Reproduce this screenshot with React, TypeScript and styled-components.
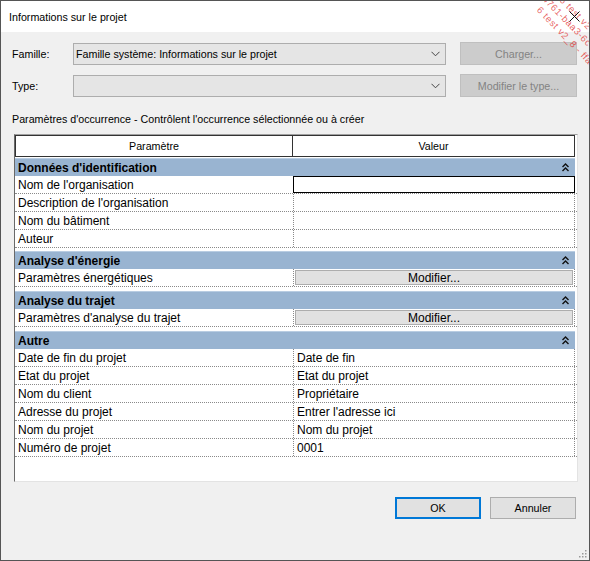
import styled, { createGlobalStyle } from "styled-components"

const GlobalStyle = createGlobalStyle`
  html, body { margin: 0; padding: 0; background: #fff; }
  body {
    font-family: "Liberation Sans", Arial, sans-serif;
    font-size: 10.7px;
    color: #000;
  }
`

const Window = styled.div`
  position: relative;
  width: 590px;
  height: 561px;
  box-sizing: border-box;
  border: 1px solid #555;
  background: #f0f0f0;
  display: flex;
  flex-direction: column;
  overflow: hidden;
`
const TitleBar = styled.div`
  height: 31px;
  flex: none;
  background: #fff;
  display: flex;
  align-items: center;
  justify-content: space-between;
  padding: 0 9px 0 8px;
  font-size: 10.7px;
`
const CloseIcon = styled.svg`
  width: 11px;
  height: 11px;
  position: relative;
  z-index: 2;
`
const Body = styled.div`
  flex: 1;
  display: flex;
  flex-direction: column;
  padding: 10px 12px 0 11px;
`
const FormGrid = styled.div`
  display: grid;
  grid-template-columns: 47px 373px 117px;
  column-gap: 14px;
  row-gap: 9px;
  align-items: center;
`
const FieldLabel = styled.div`
  font-size: 10.7px;
`
const Combo = styled.div`
  height: 22px;
  box-sizing: border-box;
  border: 1px solid #adadad;
  background: #e5e5e5;
  display: flex;
  align-items: center;
  justify-content: space-between;
  padding: 0 5px 0 2px;
  font-size: 10.7px;
`
const DisabledButton = styled.div`
  height: 23px;
  box-sizing: border-box;
  border: 1px solid #bfbfbf;
  background: #cccccc;
  color: #838383;
  display: flex;
  align-items: center;
  justify-content: center;
  font-size: 10.7px;
`
const SectionLabel = styled.div`
  margin-top: 14px;
  height: 16px;
  line-height: 16px;
  font-size: 10.7px;
`
const Table = styled.div`
  margin: 7px 0 0 2px;
  width: 564px;
  height: 348px;
  box-sizing: border-box;
  border-style: solid;
  border-width: 1px;
  border-color: #a0a0a0 #e3e3e3 #e3e3e3 #696969;
  background: #fff;
  display: flex;
  flex-direction: column;
  font-size: 12px;
`
const HeaderRow = styled.div`
  display: grid;
  grid-template-columns: 278px 282px;
  height: 22px;
`
const HeaderCell = styled.div<{ $first?: boolean }>`
  border: 1px solid #333;
  border-left-width: ${(p) => (p.$first ? "1px" : "0")};
  display: flex;
  align-items: center;
  justify-content: center;
  font-size: 10.7px;
`
const GroupRow = styled.div<{ $gap: number }>`
  margin-top: ${(p) => p.$gap}px;
  width: 560px;
  height: 18px;
  box-sizing: border-box;
  background: #99b4d1;
  border-top: 1px solid #b9cde2;
  display: flex;
  align-items: center;
  justify-content: space-between;
  padding: 0 6px 0 3px;
  font-weight: bold;
  font-size: 12px;
`
const Row = styled.div`
  display: grid;
  grid-template-columns: 278px 282px;
  height: 18px;
  box-sizing: border-box;
  border-bottom: 1px dotted #8a8a8a;
`
const Cell = styled.div`
  display: flex;
  align-items: center;
  padding-left: 3px;
  font-size: 12px;
  white-space: nowrap;
`
const ValueCell = styled(Cell)<{ $selected?: boolean }>`
  border-left: 1px dotted #8a8a8a;
  border-right: 1px dotted #8a8a8a;
  ${(p) => (p.$selected ? "outline: 1px solid #000; outline-offset: -1px;" : "")}
`
const InlineButton = styled.div`
  flex: 1;
  height: 15px;
  margin: 0 1px 0 -2px;
  box-sizing: border-box;
  border: 1px solid #adadad;
  background: #e1e1e1;
  display: flex;
  align-items: center;
  justify-content: center;
  font-size: 12px;
`
const Footer = styled.div`
  margin-top: 15px;
  display: flex;
  justify-content: flex-end;
  gap: 9px;
  padding-right: 1px;
`
const DialogButton = styled.div<{ $default?: boolean }>`
  width: 86px;
  height: 22px;
  box-sizing: border-box;
  border: ${(p) => (p.$default ? "2px solid #0078d7" : "1px solid #adadad")};
  background: #e1e1e1;
  display: flex;
  align-items: center;
  justify-content: center;
  font-size: 10.7px;
`
const Grip = styled.svg`
  position: absolute;
  right: 2px;
  bottom: 2px;
  width: 10px;
  height: 10px;
`
const Watermark = styled.div`
  position: absolute;
  top: 0;
  right: 0;
  width: 110px;
  height: 80px;
  overflow: hidden;
  pointer-events: none;
  z-index: 1;
`
const WatermarkLine = styled.span<{ $x: number; $y: number }>`
  position: absolute;
  left: ${(p) => p.$x}px;
  top: ${(p) => p.$y}px;
  transform: rotate(46deg);
  transform-origin: 0 0;
  color: rgba(226, 60, 60, 0.8);
  font-size: 9.5px;
  line-height: 10px;
  white-space: nowrap;
  letter-spacing: 0.6px;
`

const ChevronDown = () => (
  <svg width="9" height="6" viewBox="0 0 9 6">
    <polyline points="0.5,0.8 4.5,4.8 8.5,0.8" fill="none" stroke="#444" strokeWidth="1" />
  </svg>
)

const Collapse = () => (
  <svg width="7" height="9" viewBox="0 0 7 9">
    <polyline points="0.5,4 3.5,1 6.5,4" fill="none" stroke="#111" strokeWidth="1.4" />
    <polyline points="0.5,8 3.5,5 6.5,8" fill="none" stroke="#111" strokeWidth="1.4" />
  </svg>
)

type RowData = { label: string; value?: string; button?: boolean; selected?: boolean }
type Group = { title: string; gap: number; rows: RowData[] }

const groups: Group[] = [
  {
    title: "Données d'identification",
    gap: 1,
    rows: [
      { label: "Nom de l'organisation", selected: true },
      { label: "Description de l'organisation" },
      { label: "Nom du bâtiment" },
      { label: "Auteur" },
    ],
  },
  {
    title: "Analyse d'énergie",
    gap: 3,
    rows: [{ label: "Paramètres énergétiques", button: true }],
  },
  {
    title: "Analyse du trajet",
    gap: 4,
    rows: [{ label: "Paramètres d'analyse du trajet", button: true }],
  },
  {
    title: "Autre",
    gap: 4,
    rows: [
      { label: "Date de fin du projet", value: "Date de fin" },
      { label: "Etat du projet", value: "Etat du projet" },
      { label: "Nom du client", value: "Propriétaire" },
      { label: "Adresse du projet", value: "Entrer l'adresse ici" },
      { label: "Nom du projet", value: "Nom du projet" },
      { label: "Numéro de projet", value: "0001" },
    ],
  },
]

const App = () => {
  return (
    <>
      <GlobalStyle />
      <Window>
        <TitleBar>
          <span>Informations sur le projet</span>
          <CloseIcon viewBox="0 0 11 11">
            <line x1="0.5" y1="0.5" x2="10.5" y2="10.5" stroke="#111" strokeWidth="1" />
            <line x1="10.5" y1="0.5" x2="0.5" y2="10.5" stroke="#111" strokeWidth="1" />
          </CloseIcon>
        </TitleBar>
        <Body>
          <FormGrid>
            <FieldLabel>Famille:</FieldLabel>
            <Combo>
              <span>Famille système: Informations sur le projet</span>
              <ChevronDown />
            </Combo>
            <DisabledButton>Charger...</DisabledButton>
            <FieldLabel>Type:</FieldLabel>
            <Combo>
              <span />
              <ChevronDown />
            </Combo>
            <DisabledButton>Modifier le type...</DisabledButton>
          </FormGrid>
          <SectionLabel>Paramètres d'occurrence - Contrôlent l'occurrence sélectionnée ou à créer</SectionLabel>
          <Table>
            <HeaderRow>
              <HeaderCell $first>Paramètre</HeaderCell>
              <HeaderCell>Valeur</HeaderCell>
            </HeaderRow>
            {groups.map((g) => (
              <div key={g.title}>
                <GroupRow $gap={g.gap}>
                  <span>{g.title}</span>
                  <Collapse />
                </GroupRow>
                {g.rows.map((r) => (
                  <Row key={r.label}>
                    <Cell>{r.label}</Cell>
                    <ValueCell $selected={r.selected}>
                      {r.button ? <InlineButton>Modifier...</InlineButton> : r.value}
                    </ValueCell>
                  </Row>
                ))}
              </div>
            ))}
          </Table>
          <Footer>
            <DialogButton $default>OK</DialogButton>
            <DialogButton>Annuler</DialogButton>
          </Footer>
        </Body>
        <Grip viewBox="0 0 10 10">
          {[[8, 2], [8, 5], [5, 5], [8, 8], [5, 8], [2, 8]].map(([x, y]) => (
            <rect key={`${x}-${y}`} x={x} y={y} width="1.5" height="1.5" fill="#999" />
          ))}
        </Grip>
        <Watermark>
          <WatermarkLine $x={78} $y={-14}>7c6 test v2</WatermarkLine>
          <WatermarkLine $x={62} $y={-14}>0-4761-baa3-6c</WatermarkLine>
          <WatermarkLine $x={63} $y={4}>6 test v2_8 - ffa</WatermarkLine>
        </Watermark>
      </Window>
    </>
  )
}

export default App
